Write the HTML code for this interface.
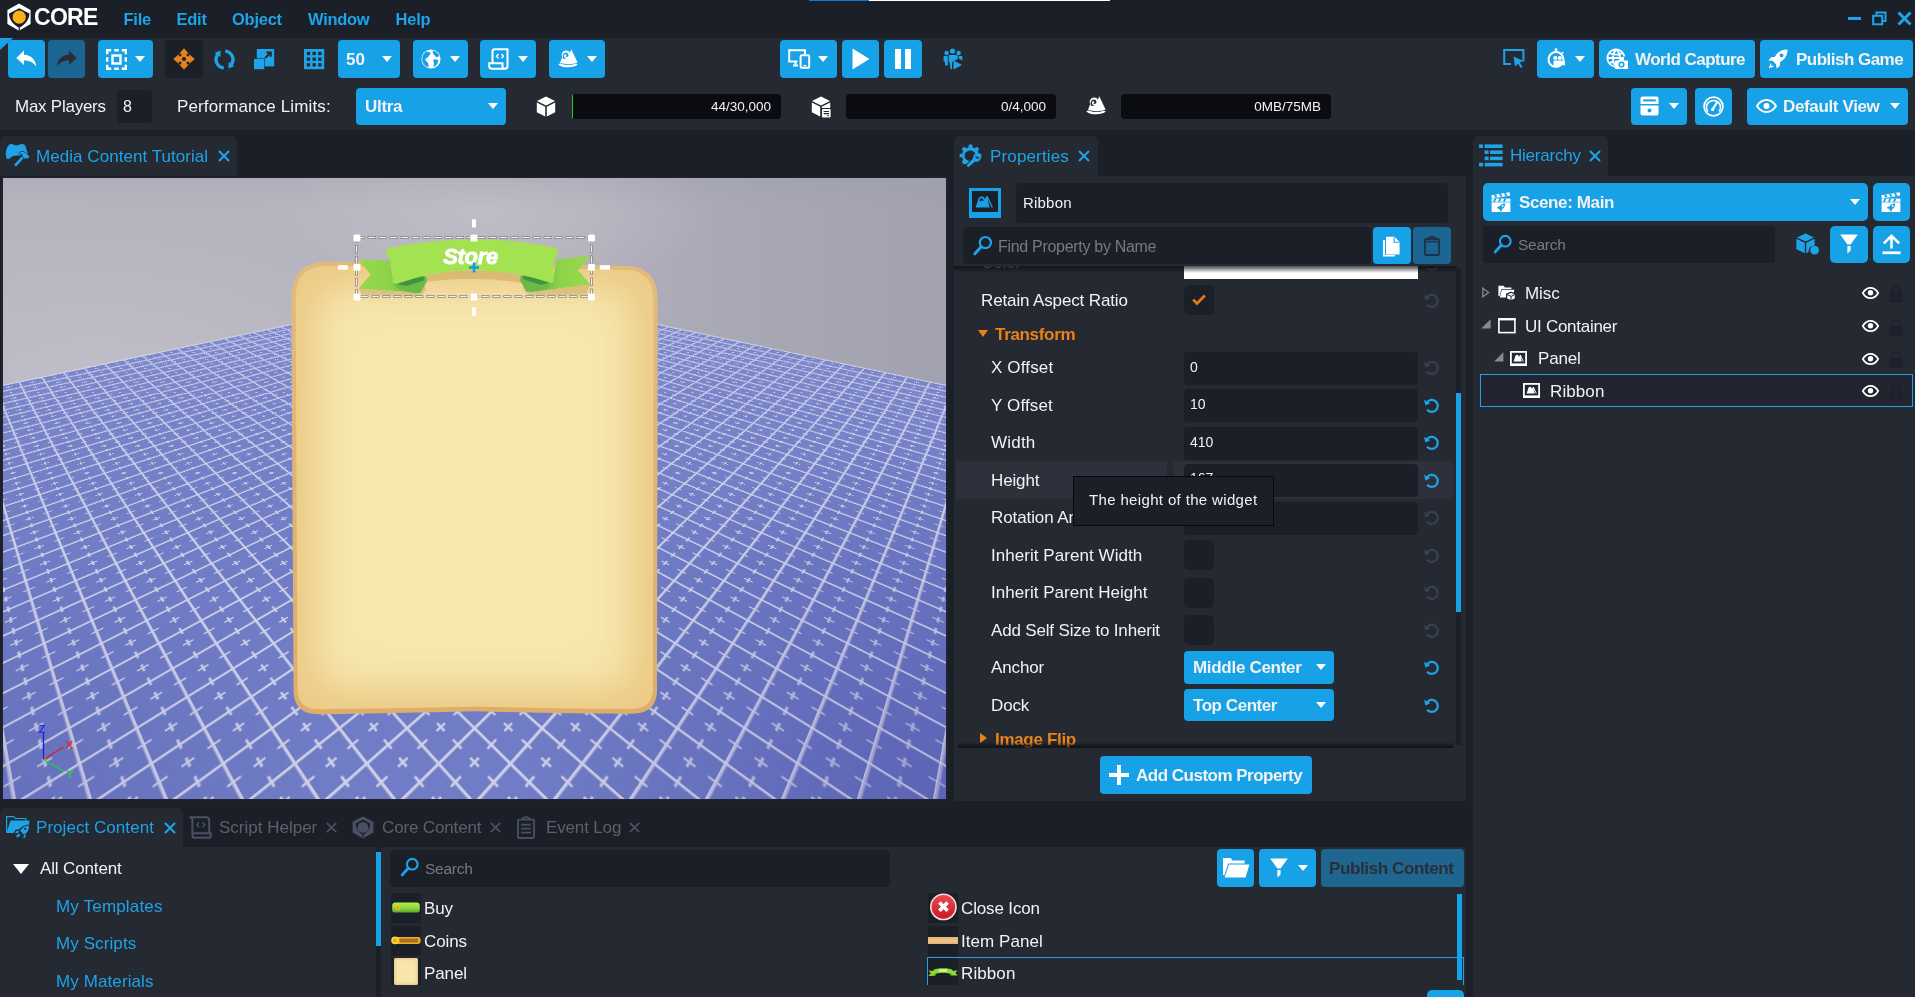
<!DOCTYPE html>
<html lang="en">
<head>
<meta charset="utf-8">
<title>Core Editor - Media Content Tutorial</title>
<style>
*{box-sizing:border-box;margin:0;padding:0}
html,body{width:1915px;height:997px;overflow:hidden;background:#1b1f28}
body{position:relative;font-family:"Liberation Sans",sans-serif;font-size:17px;color:#f2f2f2}
.a{position:absolute}
.pn{position:absolute;background:#252932}
.dk{position:absolute;background:#1b1f28}
.b{position:absolute;background:#17a1e6;border-radius:4px}
.bd{position:absolute;background:#1b6593;border-radius:4px}
.in{position:absolute;background:#1b1f28;border-radius:4px}
.t{position:absolute;white-space:pre;line-height:20px;height:20px;margin-top:-9px}
.bt{font-weight:700;letter-spacing:-0.5px}
.bl{color:#1ea3e8}
.gr{color:#5d606b}
.ph{color:#777a84}
.or{color:#e8831a}
svg{position:absolute;overflow:visible}
.car{position:absolute;width:0;height:0;border-left:5.5px solid transparent;border-right:5.5px solid transparent;border-top:6.5px solid #fff}
</style>
</head>
<body><div id="root" style="position:absolute;left:0;top:0;width:1915px;height:997px;will-change:transform">
<!-- ===== title bar ===== -->
<div class="dk" style="left:0;top:0;width:1915px;height:38px"></div>
<div class="a" style="left:809px;top:0;width:60px;height:1px;background:#0a7ad6"></div>
<div class="a" style="left:869px;top:0;width:241px;height:1px;background:#fff"></div>
<svg style="left:6px;top:3px" width="26" height="29" viewBox="0 0 26 29">
 <path d="M13 0.6 L24.6 7 V21 L13 27.8 L1.4 21 V7 Z" fill="#fff"/>
 <path d="M13.2 5.2 L23.4 10.4 C23.4 16 19.4 21.4 13.8 24.4 V28 H12.6 V24.4 C7 21.4 3 16 3 10.4 Z" fill="#1b1f28"/>
 <circle cx="13.2" cy="14.2" r="6.6" fill="#fdb017"/>
</svg>
<div class="t" style="left:34px;top:17px;font-weight:700;font-size:23px;letter-spacing:-0.7px;color:#fff;line-height:24px;height:24px;margin-top:-12px">CORE</div>
<div class="t bt bl" style="left:123.5px;top:18px;font-size:16.5px;letter-spacing:-0.25px">File</div>
<div class="t bt bl" style="left:176.5px;top:18px;font-size:16.5px;letter-spacing:-0.25px">Edit</div>
<div class="t bt bl" style="left:232px;top:18px;font-size:16.5px;letter-spacing:-0.25px">Object</div>
<div class="t bt bl" style="left:308px;top:18px;font-size:16.5px;letter-spacing:-0.3px">Window</div>
<div class="t bt bl" style="left:395.5px;top:18px;font-size:16.5px;letter-spacing:-0.2px">Help</div>
<!-- window controls -->
<div class="a" style="left:1848px;top:17px;width:13px;height:3px;background:#1ea3e8"></div>
<svg style="left:1872px;top:11px" width="15" height="15" viewBox="0 0 15 15" fill="none" stroke="#1ea3e8" stroke-width="2"><path d="M4.5 4 V1.5 H13.5 V10 H10.5"/><rect x="1.2" y="4.8" width="9" height="8.5"/></svg>
<svg style="left:1897px;top:11px" width="15" height="15" viewBox="0 0 15 15" fill="none" stroke="#1ea3e8" stroke-width="3"><path d="M1.5 1.5 L13.5 13.5 M13.5 1.5 L1.5 13.5"/></svg>

<!-- ===== toolbar ===== -->
<div class="pn" style="left:0;top:38px;width:1915px;height:92px"></div>
<svg style="left:0;top:38px" width="13" height="12"><path d="M0 0 H13 L0 12 Z" fill="#17a1e6"/></svg>
<!-- undo / redo -->
<div class="b" style="left:8px;top:40px;width:37px;height:38px"></div>
<svg style="left:16px;top:50px" width="21" height="18" viewBox="0 0 21 18"><path d="M8 0.5 L0.3 8 L8 15 V10.5 C13 10.5 17 12 20.3 16.5 C19.5 9.5 15 5 8 4.8 Z" fill="#fff"/></svg>
<div class="bd" style="left:48px;top:40px;width:37px;height:38px"></div>
<svg style="left:56px;top:50px" width="21" height="18" viewBox="0 0 21 18"><path d="M13 0.5 L20.7 8 L13 15 V10.5 C8 10.5 4 12 0.7 16.5 C1.5 9.5 6 5 13 4.8 Z" fill="#2a2d33"/></svg>
<!-- select -->
<div class="b" style="left:98px;top:40px;width:55px;height:38px"></div>
<svg style="left:106px;top:49px" width="21" height="21" viewBox="0 0 21 21" fill="none" stroke="#fff" stroke-width="2.4"><path d="M1.2 5.2 V1.2 H5.2 M15.8 1.2 H19.8 V5.2 M19.8 15.8 V19.8 H15.8 M5.2 19.8 H1.2 V15.8 M8.2 1.2 H12.8 M8.2 19.8 H12.8 M1.2 8.2 V12.8 M19.8 8.2 V12.8"/><rect x="6.5" y="6.5" width="8" height="8"/></svg>
<div class="car" style="left:135px;top:56px"></div>
<!-- move -->
<div class="dk" style="left:165px;top:40px;width:38px;height:38px;border-radius:4px"></div>
<svg style="left:173px;top:48px" width="22" height="22" viewBox="0 0 22 22"><path d="M11 0.3 L15.8 5.8 H13.7 V8.3 H16.2 V6.2 L21.7 11 L16.2 15.8 V13.7 H13.7 V16.2 H15.8 L11 21.7 L6.2 16.2 H8.3 V13.7 H5.8 V15.8 L0.3 11 L5.8 6.2 V8.3 H8.3 V5.8 H6.2 Z" fill="#e8831a"/><circle cx="11" cy="11" r="2.1" fill="#1b1f28"/></svg>
<!-- rotate -->
<svg style="left:213.6px;top:48.6px" width="21" height="21" viewBox="0 0 21 21" fill="none" stroke="#1ea3e8" stroke-width="3.4"><path d="M9.8 18.9 A8.4 8.4 0 0 1 3.6 5.7"/><path d="M11.2 2.1 A8.4 8.4 0 0 1 17.4 15.3"/><path d="M6.4 1.6 L0.6 3.9 L6.6 8 Z M14.6 19.4 L20.4 17.1 L14.4 13 Z" fill="#1ea3e8" stroke="none"/></svg>
<!-- scale -->
<svg style="left:254px;top:48.8px" width="21" height="21" viewBox="0 0 21 21" fill="#1ea3e8"><rect x="2.8" y="0" width="17.4" height="17.4"/><rect x="-0.6" y="9.3" width="11.5" height="11.5" fill="#252932"/><rect x="0" y="9.9" width="10.3" height="10.3"/><path d="M11.2 9 L16 4.2 M12.4 3.4 H16.8 V7.8" stroke="#252932" stroke-width="2" fill="none"/></svg>
<!-- grid -->
<svg style="left:303.8px;top:48.8px" width="21" height="21" viewBox="0 0 21 21"><rect x="0" y="0" width="20.2" height="20.2" fill="#1ea3e8"/><g fill="#252932"><rect x="2.8" y="2.8" width="3.3" height="3.3"/><rect x="8.5" y="2.8" width="3.3" height="3.3"/><rect x="14.2" y="2.8" width="3.3" height="3.3"/><rect x="2.8" y="8.5" width="3.3" height="3.3"/><rect x="8.5" y="8.5" width="3.3" height="3.3"/><rect x="14.2" y="8.5" width="3.3" height="3.3"/><rect x="2.8" y="14.2" width="3.3" height="3.3"/><rect x="8.5" y="14.2" width="3.3" height="3.3"/><rect x="14.2" y="14.2" width="3.3" height="3.3"/></g></svg>
<div class="b" style="left:338px;top:40px;width:62px;height:38px"></div>
<div class="t bt" style="left:346px;top:59px;letter-spacing:0">50</div>
<div class="car" style="left:382px;top:56px"></div>
<!-- globe -->
<div class="b" style="left:413px;top:40px;width:55px;height:38px"></div>
<svg style="left:421px;top:49px" width="20" height="20" viewBox="0 0 20 20"><circle cx="10" cy="10" r="9.6" fill="#fff"/><path d="M5 2.5 C7 3 9 2.5 9.5 4 C10 5.5 8 6 7.5 7.5 C7 9 5 8.5 4.5 10 C4 12 6 12.5 7 14 C7.6 15 7 17 8 18.5 C3.5 17.5 1 14 1.2 9.5 C1.4 6.5 3 4 5 2.5 Z M12 1.4 C15 2 17.5 4 18.5 7.5 C17 7 16.5 8.5 15 8 C13.5 7.5 14 6 12.8 5.5 C11.8 5 12.5 3.5 11.5 3 Z M13 10.5 C14.5 10 16 11 17.5 11.5 C17 14 15.5 16.5 13 18 C12 16.5 13.5 15 12.8 13.5 C12.3 12.5 12 11 13 10.5 Z" fill="#17a1e6"/></svg>
<div class="car" style="left:450px;top:56px"></div>
<!-- script -->
<div class="b" style="left:480px;top:40px;width:56px;height:38px"></div>
<svg style="left:488px;top:48px" width="21" height="22" viewBox="0 0 21 22" fill="none" stroke="#fff" stroke-width="2"><path d="M4.5 15 V3.5 C4.5 2 5.5 1.2 7 1.2 H19.5 V18 C19.5 19.8 18.5 20.8 17 20.8 H4 C2 20.8 1.2 19.5 1.2 18 V15.2 H14.5 V18.5 C14.5 20 15.5 20.8 17 20.8"/><path d="M10.5 6 L8.5 8.2 L10.5 10.4 M13.5 6 L15.5 8.2 L13.5 10.4" stroke-width="1.4"/></svg>
<div class="car" style="left:518px;top:56px"></div>
<!-- hat -->
<div class="b" style="left:549px;top:40px;width:56px;height:38px"></div>
<svg style="left:558px;top:49px" width="20" height="19" viewBox="0 0 20 19" fill="#fff"><path d="M13.2 0.3 L19.6 13.6 C14.5 15.6 6.5 15.6 2 13.8 L4.2 8.2 C2.8 5.4 4.6 1.9 8 1.6 C9.8 1.5 11.2 2.4 11.9 3.7 Z"/><path d="M0.4 15.4 C1.2 14.4 2.2 14.2 3.2 14.8 C8 16.6 13 16.4 17.4 14.8 C18.4 14.4 19.2 14.8 19.7 15.6 C16.5 19.2 3.5 19.2 0.4 15.4 Z"/><path d="M7.8 3.4 C9.4 3.4 10.5 4.6 10.5 6 C10.5 7.2 9.6 8 8.6 8 C8 8 7.5 7.7 7.3 7.2 C8 7.2 8.5 6.6 8.4 6 C8.3 5.4 7.7 5 7 5.2 C6.2 5.4 5.8 6.2 6 7.2 C6.3 8.6 7.4 9.4 8.8 9.4 L5.4 10 C4.6 8.8 4.4 7.4 4.8 6 C5.2 4.4 6.4 3.4 7.8 3.4 Z" fill="#17a1e6"/></svg>
<div class="car" style="left:587px;top:56px"></div>
<!-- center: preview -->
<div class="b" style="left:780px;top:40px;width:57px;height:38px"></div>
<svg style="left:788px;top:49px" width="23" height="20" viewBox="0 0 23 20" fill="none" stroke="#fff" stroke-width="2"><path d="M9.5 12.5 H1.2 V1.2 H17 V5"/><path d="M5 16.5 H10" /><path d="M7.5 13 V16"/><rect x="12.6" y="6.2" width="8.6" height="12.6" rx="1.2"/><path d="M15.5 16.6 H18.3" stroke-width="1.3"/></svg>
<div class="car" style="left:818px;top:56px"></div>
<div class="b" style="left:842px;top:40px;width:37px;height:38px"></div>
<svg style="left:852px;top:48px" width="18" height="22"><path d="M0.5 0.5 L17.5 11 L0.5 21.5 Z" fill="#fff"/></svg>
<div class="b" style="left:884px;top:40px;width:38px;height:38px"></div>
<div class="a" style="left:895px;top:49px;width:6px;height:20px;background:#fff"></div>
<div class="a" style="left:905px;top:49px;width:6px;height:20px;background:#fff"></div>
<!-- people -->
<svg style="left:943px;top:48px" width="20" height="22" viewBox="0 0 20 22" fill="#1ea3e8"><circle cx="9.5" cy="3" r="2.6"/><circle cx="3.6" cy="5" r="2.2"/><circle cx="15.6" cy="5" r="2.2"/><path d="M5.8 7 H13.2 C14.3 7 14.8 7.8 14.8 9 V11 L9 14 V21 H7.5 L6.8 14.5 L5.8 14 Z"/><path d="M1 8 H4.8 V17.5 H2.2 L1.8 13.5 L0.6 13 V9 C0.6 8.3 0.8 8 1 8 Z"/><path d="M15.8 8 H18.4 C19 8 19.4 8.5 19.4 9.2 V12.5 L15.8 10.5 Z"/><path d="M10.5 12.5 L19 17 L10.5 21.5 Z"/></svg>
<!-- right side -->
<svg style="left:1503px;top:48px" width="22" height="22" viewBox="0 0 22 22" fill="none" stroke="#1ea3e8" stroke-width="2"><path d="M8 16 H1.2 V2 H20.4 V13.5"/><path d="M10.5 8.5 L20.5 13 L16.8 14.6 L19.5 19 L17.8 20 L15 15.8 L12 18.5 Z" fill="#1ea3e8" stroke="none"/></svg>
<div class="b" style="left:1537px;top:40px;width:57px;height:38px"></div>
<svg style="left:1547px;top:48px" width="20" height="21" viewBox="0 0 20 21" fill="none" stroke="#fff" stroke-width="2"><circle cx="9" cy="11.5" r="7.5"/><path d="M9 4 V1.5" /><circle cx="9" cy="1.6" r="1" fill="#fff" stroke-width="1"/><path d="M14.8 5.5 L16.3 4" stroke-width="1.6"/><g fill="#fff" stroke="none"><circle cx="8.3" cy="10" r="2.1"/><circle cx="12.8" cy="10" r="2.1"/><rect x="6.5" y="12.5" width="8.5" height="5.5" rx="0.8"/><path d="M15 14.2 L18 12.8 V17.8 L15 16.4 Z"/></g></svg>
<div class="car" style="left:1575px;top:56px"></div>
<div class="b" style="left:1599px;top:40px;width:156px;height:38px"></div>
<svg style="left:1606px;top:48px" width="23" height="22" viewBox="0 0 23 22" fill="none" stroke="#fff" stroke-width="1.8"><path d="M9 18.6 A8.6 8.6 0 1 1 18.4 8.5"/><path d="M1.5 10 H18 M10 1.5 C6.5 5 6 12 8.5 17 M10 1.5 C13 4 14 7 14 9.5 M3 5 C7 7 13 7 17 5 M3 15 C5 14.2 7 14 8.5 14"/><g fill="#fff" stroke="none"><path d="M10 12.5 H12.5 L13.5 11 H17.5 L18.5 12.5 H21 C21.6 12.5 22 13 22 13.5 V20 C22 20.6 21.6 21 21 21 H10 C9.4 21 9 20.6 9 20 V13.5 C9 13 9.4 12.5 10 12.5 Z"/></g><circle cx="15.5" cy="16.6" r="2.3" stroke="#17a1e6" stroke-width="1.5" fill="#fff"/></svg>
<div class="t bt" style="left:1635px;top:59px;letter-spacing:-0.52px">World Capture</div>
<div class="b" style="left:1760px;top:40px;width:153px;height:38px"></div>
<svg style="left:1768px;top:49px" width="20" height="20" viewBox="0 0 20 20" fill="#fff"><path d="M19.5 0.5 C14 0.3 9.5 3 6.8 8 L3 8.2 L0.5 11.5 L4.5 11.8 L8.2 15.5 L8.5 19.5 L11.8 17 L12 13.2 C17 10.5 19.7 6 19.5 0.5 Z"/><circle cx="13.6" cy="6.4" r="1.9" fill="#17a1e6"/><path d="M2.5 14 L0.8 19.2 L6 17.5 L4.8 16.6 L3 17 L3.4 15.2 Z"/></svg>
<div class="t bt" style="left:1796px;top:59px;letter-spacing:-0.52px">Publish Game</div>

<!-- row 2 -->
<div class="t" style="left:15px;top:106px;letter-spacing:-0.25px">Max Players</div>
<div class="in" style="left:117px;top:90px;width:35px;height:33px"></div>
<div class="t" style="left:123px;top:106px;font-size:16px">8</div>
<div class="t" style="left:177px;top:106px;letter-spacing:0.14px">Performance Limits:</div>
<div class="b" style="left:356px;top:88px;width:150px;height:37px"></div>
<div class="t bt" style="left:365px;top:106px;letter-spacing:-0.3px">Ultra</div>
<div class="car" style="left:488px;top:103px"></div>
<svg style="left:536px;top:96px" width="20" height="21" viewBox="0 0 20 21" fill="#fff"><path d="M10 0.5 L19 5 L10 9.5 L1 5 Z"/><path d="M0.8 6.6 L9.2 10.8 V20.5 L0.8 16.2 Z"/><path d="M19.2 6.6 L10.8 10.8 V20.5 L19.2 16.2 Z"/></svg>
<div class="a" style="left:572px;top:94px;width:209px;height:25px;background:#0b0c11;border-radius:4px"></div>
<div class="a" style="left:572px;top:95px;width:1px;height:23px;background:#18d21c"></div>
<div class="t" style="right:1144px;top:106px;font-size:13.5px">44/30,000</div>
<svg style="left:811px;top:96px" width="20" height="22" viewBox="0 0 20 22" fill="#fff"><path d="M10 0.5 L19 5 L10 9.5 L1 5 Z"/><path d="M0.8 6.6 L9.2 10.8 V20.5 L0.8 16.2 Z"/><path d="M19.2 6.6 L10.8 10.8 V12 H19.2 Z"/><rect x="11" y="13" width="8.6" height="8.6" rx="1"/><path d="M12.6 15.5 H18 M12.6 17.6 H18" stroke="#252932" stroke-width="1.1"/><circle cx="17" cy="19.8" r="0.8" fill="#252932"/></svg>
<div class="a" style="left:846px;top:94px;width:210px;height:25px;background:#0b0c11;border-radius:4px"></div>
<div class="t" style="right:869px;top:106px;font-size:13.5px">0/4,000</div>
<svg style="left:1086px;top:96px" width="20" height="19" viewBox="0 0 20 19" fill="#fff"><path d="M13.2 0.3 L19.6 13.6 C14.5 15.6 6.5 15.6 2 13.8 L4.2 8.2 C2.8 5.4 4.6 1.9 8 1.6 C9.8 1.5 11.2 2.4 11.9 3.7 Z"/><path d="M0.4 15.4 C1.2 14.4 2.2 14.2 3.2 14.8 C8 16.6 13 16.4 17.4 14.8 C18.4 14.4 19.2 14.8 19.7 15.6 C16.5 19.2 3.5 19.2 0.4 15.4 Z"/><path d="M7.8 3.4 C9.4 3.4 10.5 4.6 10.5 6 C10.5 7.2 9.6 8 8.6 8 C8 8 7.5 7.7 7.3 7.2 C8 7.2 8.5 6.6 8.4 6 C8.3 5.4 7.7 5 7 5.2 C6.2 5.4 5.8 6.2 6 7.2 C6.3 8.6 7.4 9.4 8.8 9.4 L5.4 10 C4.6 8.8 4.4 7.4 4.8 6 C5.2 4.4 6.4 3.4 7.8 3.4 Z" fill="#252932"/></svg>
<div class="a" style="left:1121px;top:94px;width:210px;height:25px;background:#0b0c11;border-radius:4px"></div>
<div class="t" style="right:594px;top:106px;font-size:13.5px">0MB/75MB</div>
<div class="b" style="left:1631px;top:88px;width:56px;height:37px"></div>
<svg style="left:1640px;top:96px" width="19" height="20" viewBox="0 0 19 20" fill="#fff"><path d="M2.5 0.5 H16.5 C17.6 0.5 18.5 1.4 18.5 2.5 V8 H0.5 V2.5 C0.5 1.4 1.4 0.5 2.5 0.5 Z"/><path d="M0.5 9.6 H18.5 V17.5 C18.5 18.6 17.6 19.5 16.5 19.5 H2.5 C1.4 19.5 0.5 18.6 0.5 17.5 Z"/><rect x="3.2" y="3.4" width="12.6" height="2" fill="#17a1e6"/><circle cx="9.5" cy="14.6" r="2" fill="#17a1e6"/></svg>
<div class="car" style="left:1669px;top:103px"></div>
<div class="b" style="left:1695px;top:88px;width:37px;height:37px"></div>
<svg style="left:1703px;top:96px" width="21" height="21" viewBox="0 0 21 21" fill="none" stroke="#fff" stroke-width="1.8"><circle cx="10.5" cy="10.5" r="9.4"/><path d="M4.8 15.5 A7 7 0 1 1 16.2 15.5" stroke-width="1.6"/><path d="M9.5 13.5 L14 6.5" stroke-width="2.2" stroke-linecap="round"/><circle cx="9.7" cy="13.4" r="1.6" fill="#fff" stroke="none"/></svg>
<div class="b" style="left:1747px;top:88px;width:161px;height:37px"></div>
<svg style="left:1756px;top:99px" width="21" height="14" viewBox="0 0 21 14" fill="none" stroke="#fff" stroke-width="2"><path d="M1 7 C4 2.2 7 1 10.5 1 C14 1 17 2.2 20 7 C17 11.8 14 13 10.5 13 C7 13 4 11.8 1 7 Z"/><circle cx="10.5" cy="7" r="3" fill="#fff" stroke="none"/></svg>
<div class="t bt" style="left:1783px;top:106px;letter-spacing:-0.36px">Default View</div>
<div class="car" style="left:1890px;top:103px"></div>

<!-- gap row -->
<div class="dk" style="left:0;top:130px;width:1915px;height:48px"></div>
<!-- ===== main viewport tab ===== -->
<div class="pn" style="left:0;top:136px;width:237px;height:40px;border-radius:5px 5px 0 0"></div>
<svg style="left:5px;top:144px" width="25" height="24" viewBox="0 0 25 24" fill="#1ea3e8"><path d="M6 0 C8 0 9.5 1.4 11.4 1.4 C13.3 1.4 15 0 17.5 0 C20 0 21 3 21.7 6 C22.3 8 22.8 9.5 22.8 11.4 L16 10.6 L14.6 11.5 C11.5 11.3 9 11.6 7 12.4 C5.6 13.4 4.6 15 3 15 C1.4 15 0.8 13 0.8 10.4 C0.8 6 2.6 0 6 0 Z"/><g stroke="#252932" stroke-width="1.1" paint-order="stroke"><path d="M9.2 20.6 L18.2 10.8 L20.2 12.6 L10.9 22.7 Z"/><path d="M14.2 9 C15.6 7.4 18.2 7.4 20.2 8.6 L24.5 12.6 L22.4 14.9 L21.2 13.7 L20 14.9 L17.2 12.2 L18 11 C17 10.2 15.6 9.6 14.2 9 Z"/></g></svg>
<div class="t bl" style="left:36px;top:156px;letter-spacing:0.05px">Media Content Tutorial</div>
<svg style="left:218px;top:150px" width="12" height="12" viewBox="0 0 12 12" stroke="#1ea3e8" stroke-width="2.1" fill="none"><path d="M1 1 L11 11 M11 1 L1 11"/></svg>

<!-- ===== viewport ===== -->
<div class="a" style="left:1px;top:177px;width:947px;height:624px;background:#20232e"></div>
<div class="a" id="vp" style="left:3px;top:178px;width:943px;height:621px;overflow:hidden;background:linear-gradient(90deg,#b5b4bf 0%,#b4b3be 40%,#b0afbb 62%,#a8a7b4 80%,#a2a1af 100%)">
 <div class="a" style="left:-260px;top:40px;width:720px;height:330px;background:radial-gradient(closest-side,rgba(197,196,205,.7),rgba(197,196,205,0))"></div>
 <div class="a" style="left:250px;top:-50px;width:460px;height:170px;background:radial-gradient(closest-side,rgba(198,197,206,.6),rgba(198,197,206,0))"></div>
 <div class="a" style="left:0px;top:-40px;width:943px;height:70px;background:linear-gradient(180deg,rgba(150,149,163,.45),rgba(150,149,163,0))"></div>
 <div class="a" style="left:0;top:0;width:943px;height:621px;filter:blur(0.7px)">
 <div class="a" id="floor" style="left:0;top:0;width:2000px;height:2000px;transform-origin:0 0;transform:matrix3d(-0.26421404,0.003197351,0,-0.0002532982,0.025353839,0.003197351,0,-0.0002532982,0,0,1,0,471.5,108,0,1);clip-path:polygon(0 0,2000px 0,2000px 1400px,1400px 2000px,0 2000px);background:#707cc5">
  <svg width="2000" height="2000" style="left:0;top:0">
   <defs><pattern id="gp" width="50" height="50" patternUnits="userSpaceOnUse">
    <path d="M0 0 H50 M0 0 V50" stroke="#cdcfe6" stroke-width="4.8" fill="none"/>
    <path d="M25 -6.5 V6.5 M-6.5 25 H6.5 M25 43.5 V56.5 M43.5 25 H56.5 M19 25 H31 M25 19 V31" stroke="#cdcfe6" stroke-width="2.5" fill="none"/>
   </pattern></defs>
   <rect width="2000" height="2000" fill="url(#gp)"/>
  </svg>
 </div>
 </div>
 <div class="a" style="left:0;top:200px;width:943px;height:421px;background:radial-gradient(ellipse 420px 360px at 100% 100%,rgba(52,52,150,.34),rgba(52,52,150,0)),radial-gradient(ellipse 320px 260px at 0% 100%,rgba(52,52,150,.16),rgba(52,52,150,0))"></div>
 <svg style="left:0;top:0" width="943" height="621" viewBox="0 0 943 621"><path d="M471.5 108.0L1058.4 231.8 M471.5 108.0L-115.4 231.8 M464.2 109.5L1058.8 238.3 M478.8 109.5L-115.8 238.3 M456.6 111.1L1059.2 245.1 M486.4 111.1L-116.2 245.1 M448.9 112.8L1059.7 252.2 M494.1 112.8L-116.7 252.2 M441.0 114.4L1060.1 259.8 M502.0 114.4L-117.1 259.8 M432.9 116.2L1060.6 267.8 M510.1 116.2L-117.6 267.8 M424.5 117.9L1061.2 276.4 M518.5 117.9L-118.2 276.4 M415.9 119.7L1061.7 285.4 M527.1 119.7L-118.7 285.4 M407.1 121.6L1062.3 295.0 M535.9 121.6L-119.3 295.0 M398.0 123.5L1063.0 305.3 M545.0 123.5L-120.0 305.3 M388.6 125.5L1063.7 316.3 M554.4 125.5L-120.7 316.3 M379.0 127.5L1064.4 328.0 M564.0 127.5L-121.4 328.0 M369.1 129.6L1065.2 340.7 M573.9 129.6L-122.2 340.7 M358.8 131.8L1066.0 354.3 M584.2 131.8L-123.0 354.3 M348.3 134.0L1067.0 369.0 M594.7 134.0L-124.0 369.0 M337.4 136.3L1067.9 384.9 M605.6 136.3L-124.9 384.9 M326.2 138.7L1069.0 402.2 M616.8 138.7L-126.0 402.2 M314.7 141.1L1070.2 421.1 M628.3 141.1L-127.2 421.1 M302.7 143.6L1071.5 441.8 M640.3 143.6L-128.5 441.8 M290.4 146.2L1072.9 464.6 M652.6 146.2L-129.9 464.6 M277.6 148.9L1074.5 489.8 M665.4 148.9L-131.5 489.8 M264.4 151.7L1076.3 517.7 M678.6 151.7L-133.3 517.7 M250.7 154.6L1078.2 549.0 M692.3 154.6L-135.2 549.0 M236.6 157.6L1080.4 584.2 M706.4 157.6L-137.4 584.2 M221.9 160.7L1082.9 624.1 M721.1 160.7L-139.9 624.1 M206.7 163.9L1085.8 669.7 M736.3 163.9L-142.8 669.7 M190.9 167.2L1089.0 722.4 M752.1 167.2L-146.0 722.4 M174.5 170.7L1000.8 722.4 M768.5 170.7L-57.8 722.4 M157.4 174.3L912.6 722.4 M785.6 174.3L30.4 722.4 M139.7 178.0L824.4 722.4 M803.3 178.0L118.6 722.4 M121.2 181.9L736.2 722.4 M821.8 181.9L206.8 722.4 M102.0 186.0L647.9 722.4 M841.0 186.0L295.1 722.4 M82.0 190.2L559.7 722.4 M861.0 190.2L383.3 722.4 M61.1 194.6L471.5 722.4 M881.9 194.6L471.5 722.4 M39.2 199.2L383.3 722.4 M903.8 199.2L559.7 722.4 M16.4 204.0L295.1 722.4 M926.6 204.0L647.9 722.4 M-7.5 209.1L206.8 722.4 M950.5 209.1L736.2 722.4 M-32.5 214.4L118.6 722.4 M975.5 214.4L824.4 722.4 M-58.8 219.9L30.4 722.4 M1001.8 219.9L912.6 722.4 M-86.4 225.7L-57.8 722.4 M1029.4 225.7L1000.8 722.4 M-115.4 231.8L-146.0 722.4 M1058.4 231.8L1089.0 722.4" fill="none" stroke="#d6d8ec" stroke-opacity=".6" stroke-width="1.4"/></svg>
 <div class="a" style="left:0;top:100px;width:943px;height:300px;clip-path:polygon(471.5px 8px,943px 109px,943px 300px,0 300px,0 109px);background:linear-gradient(180deg,rgba(178,184,230,.26) 0%,rgba(170,177,226,.18) 35%,rgba(160,168,222,.07) 70%,rgba(160,168,222,0) 100%)"></div>
<!--OVERLAY-->
 <svg style="left:0;top:0" width="943" height="621" viewBox="3 178 943 621">
  <defs>
   <filter id="bl18" x="-20%" y="-20%" width="140%" height="140%"><feGaussianBlur stdDeviation="15"/></filter>
   <filter id="bl3" x="-20%" y="-50%" width="140%" height="200%"><feGaussianBlur stdDeviation="2.5"/></filter>
   <linearGradient id="pb" x1="0" y1="0" x2="0" y2="1"><stop offset="0" stop-color="#e2bb7a"/><stop offset="1" stop-color="#dcae6a"/></linearGradient>
   <clipPath id="pin"><path id="pinp" d="M327 266 L474 266.6 L626 270 Q653.5 270.5 653.5 300 L653 689 Q653 708.5 632 709 Q560 708.5 475 706.5 Q390 708.5 318 709.3 Q297.5 709 297.5 689 L295.6 298 Q295.6 266 327 266 Z"/></clipPath>
   <linearGradient id="tl" x1="0" y1="0" x2="1" y2="0"><stop offset="0" stop-color="#97da4c"/><stop offset="0.6" stop-color="#8ed249"/><stop offset="1" stop-color="#62b343"/></linearGradient>
   <linearGradient id="tr" x1="1" y1="0" x2="0" y2="0"><stop offset="0" stop-color="#97da4c"/><stop offset="0.6" stop-color="#8ed249"/><stop offset="1" stop-color="#62b343"/></linearGradient>
  </defs>
  <!-- panel -->
  <path d="M327 261.7 L474 262.4 L626 265.9 Q657.7 266.2 657.7 300 L657 690 Q657 713.5 632 713.8 Q560 713.5 475 711.3 Q390 713.5 318 714.3 Q293.5 714 293.5 690 L291.4 298 Q291.4 262 327 261.7 Z" fill="url(#pb)"/>
  <g clip-path="url(#pin)">
   <rect x="290" y="260" width="370" height="456" fill="#eccb86"/>
   <rect x="313" y="284" width="322" height="408" rx="26" fill="#f3dda1" filter="url(#bl18)"/>
   <rect x="333" y="304" width="282" height="368" rx="26" fill="#f7e7af" filter="url(#bl18)"/>
  </g>
  <!-- ribbon shadow -->
  <g fill="#b48f45" fill-opacity=".34" clip-path="url(#pin)">
   <path d="M398 283 Q436 270.3 474 270.3 Q512 270.3 549 282.5 L556 290 Q512 279 474 279 Q436 279 420 283.5 L412 292 Z"/>
   <path d="M358.5 288.8 L412 292 L424 284 L426 290 L420 296.5 L362 294.5 Z"/>
   <path d="M590.5 284.5 L538 291 L524 283 L523 289 L529 296 L586 294.5 Z"/>
  </g>
  <!-- ribbon tails -->
  <path d="M358.5 259.5 L390 260.5 L394 284 L412 292 L358.5 288.8 L370.5 274.5 Z" fill="url(#tl)"/>
  <path d="M590.5 255.8 L557 259.5 L552 283 L538 291 L590.5 284.5 L578 270.2 Z" fill="url(#tr)"/>
  <!-- folds -->
  <path d="M392.5 282.5 L421 273.8 Q428.5 276 426.6 282 L420.5 292.8 Q411 294.2 402 290.2 Q395 287 392.5 282.5 Z" fill="#6cb947"/>
  <path d="M394.5 282 L419.5 274.6 Q425.6 276.6 424 280.4 L407.5 285.8 Q400 286 394.5 282 Z" fill="#3e953f"/>
  <path d="M553.5 280.6 L526 272.6 Q518.5 275 520.4 281 L526.5 291.6 Q536 293 545 289 Q551 286 553.5 280.6 Z" fill="#6cb947"/>
  <path d="M551.5 280.2 L527.5 273.4 Q521.4 275.4 523 279.2 L539.5 284.6 Q547 284.8 551.5 280.2 Z" fill="#3e953f"/>
  <!-- main band -->
  <path d="M385 251.5 Q388 247 394 247.2 Q430 239.5 474 239.5 Q520 239.5 553 247.5 Q558 248 558.5 252 Q551 262 553.8 281 Q553 284 549 282.5 Q512 270.3 474 270.3 Q436 270.3 398 283.5 Q393 285 392.5 281.5 Q394 262 385 251.5 Z" fill="#a3e250"/>
  <text x="470.5" y="263.5" text-anchor="middle" font-family="'Liberation Sans',sans-serif" font-weight="700" font-style="italic" font-size="22" fill="#fff" letter-spacing="-0.3" stroke="#fff" stroke-width="0.8">Store</text>
  <!-- selection -->
  <g fill="none">
   <rect x="356.5" y="237.5" width="235" height="59" stroke="#808080" stroke-width="2.6" stroke-dasharray="8.4 2.6" stroke-opacity=".9"/>
   <rect x="356.5" y="237.5" width="235" height="59" stroke="#efefef" stroke-width="1.1" stroke-dasharray="7 4" stroke-dashoffset="-0.7"/>
  </g>
  <g fill="#fff">
   <rect x="353.5" y="234.5" width="7" height="7" rx="1.5"/><rect x="470.5" y="234.5" width="7" height="7" rx="1.5"/><rect x="588" y="234.5" width="7" height="7" rx="1.5"/>
   <rect x="353.5" y="263.8" width="7" height="7" rx="1.5"/><rect x="588" y="263.8" width="7" height="7" rx="1.5"/>
   <rect x="353.5" y="293.5" width="7" height="7" rx="1.5"/><rect x="470.5" y="293.5" width="7" height="7" rx="1.5"/><rect x="588" y="293.5" width="7" height="7" rx="1.5"/>
   <rect x="472" y="219.3" width="4" height="8.2"/><rect x="472" y="307.3" width="4" height="8.4"/>
   <rect x="338" y="265.2" width="9.8" height="4.4"/><rect x="599.8" y="265.2" width="10.2" height="4.4"/>
  </g>
  <path d="M469 267.5 H479 M474 262.5 V272.5" stroke="#1797ea" stroke-width="2.4"/>
  <!-- gizmo -->
  <g stroke-width="1.25" fill="none"><path d="M43.5 759.5 V733" stroke="#1020e8"/><path d="M43.5 759.5 L63.5 747" stroke="#e01822"/><path d="M43.5 759.5 L64 771.5" stroke="#18d828"/></g>
  <g font-family="'Liberation Sans',sans-serif" font-weight="700" font-size="11.5"><text x="38.6" y="732.5" fill="#2232f0">Z</text><text x="65.6" y="748.6" fill="#d8303a">X</text><text x="66" y="778.4" fill="#30cc40">Y</text></g>
 </svg>
<!--/OVERLAY-->
</div>
<!-- ===== properties panel ===== -->
<div class="pn" style="left:954px;top:136px;width:144px;height:41px;border-radius:5px 5px 0 0"></div>
<div class="pn" style="left:954px;top:176px;width:512px;height:625px"></div>
<svg style="left:959px;top:144px" width="24" height="24" viewBox="0 0 24 24"><g fill="#1ea3e8"><path d="M10 0.6 H13 L13.6 3.3 L15.6 4.2 L18 2.7 L20.2 4.9 L18.7 7.3 L19.5 9.3 L22.3 10 V13 L19.6 13.6 C19 13 18 12.6 17 12.6 C17 9 14.5 6.4 11.3 6.4 C8 6.4 5.6 8.8 5.6 11.8 C5.6 14.6 7.5 16.6 10.2 17 L7.6 19.9 L4.9 20.3 L2.7 18 L4.2 15.7 L3.4 13.7 L0.6 13 V10 L3.3 9.4 L4.2 7.3 L2.7 4.9 L4.9 2.7 L7.3 4.2 L9.3 3.4 Z"/><path d="M9.2 23.2 L7.6 21.6 L14 14.6 C13.4 12.4 14.4 10.2 16.6 9.4 C17.4 9.1 18.2 9.1 19 9.3 L16.4 12 L17 14.2 L19.2 14.8 L21.8 12.2 C22.4 14.4 21.4 16.6 19.2 17.4 C18.2 17.8 17.2 17.7 16.2 17.4 Z"/></g><circle cx="11.3" cy="11.8" r="3.1" fill="#252932"/></svg>
<div class="t bl" style="left:990px;top:156px;letter-spacing:0.15px">Properties</div>
<svg style="left:1078px;top:150px" width="12" height="12" viewBox="0 0 12 12" stroke="#1ea3e8" stroke-width="2.1" fill="none"><path d="M1 1 L11 11 M11 1 L1 11"/></svg>
<div class="a" style="left:1184px;top:262px;width:234px;height:17px;background:#fff"></div>
<div class="t" style="left:981px;top:262px;letter-spacing:-0.13px;color:#9a9ca3">Color</div>
<svg style="left:1423.8px;top:256px" width="15.4" height="15.4" viewBox="0 0 15.4 15.4" fill="none" stroke="#3a3f52" stroke-width="2.2"><path d="M2.9 4.4 A6 6 0 1 1 3.1 11.7"/><path d="M0 1.8 L6.3 5.2 L1.4 7.5 Z" fill="#3a3f52" stroke="none"/></svg>
<div class="a" style="left:954px;top:266px;width:503px;height:7px;background:linear-gradient(180deg,rgba(10,11,16,.75),rgba(10,11,16,0))"></div>
<div class="pn" style="left:954px;top:176px;width:512px;height:90px"></div>
<div class="a" style="left:969px;top:188px;width:32px;height:30px;background:#17a1e6"></div>
<div class="a" style="left:972px;top:191px;width:26px;height:21px;background:#1b1f28"></div>
<svg style="left:975px;top:194px" width="20" height="15" viewBox="0 0 20 15" fill="#17a1e6"><path d="M0.5 13.5 L2.5 8 C3 4.5 4.5 2.2 6.5 2.2 C8 2.2 9.2 3.4 9.8 5 L11.6 2 L12.6 2 L18 13.5 H16.6 L12.4 4.6 L14.6 13.5 Z"/><path d="M4.2 7.2 C4.8 5 5.6 4 6.5 4 C7.4 4 8.2 5 8.8 7.2 L7.8 6.4 L7.1 7.4 L6.4 6.3 L5.6 7.4 L5 6.5 Z" fill="#1b1f28"/></svg>
<div class="in" style="left:1016px;top:183px;width:432px;height:40px"></div>
<div class="t" style="left:1023px;top:202px;font-size:15px;letter-spacing:0.2px">Ribbon</div>
<div class="in" style="left:963px;top:227px;width:408px;height:37px"></div>
<svg style="left:973px;top:235px" width="20" height="21" viewBox="0 0 20 21" fill="none" stroke="#1ea3e8"><circle cx="12.4" cy="7.6" r="5.6" stroke-width="2.2"/><path d="M8.2 11.8 L1.8 18.8" stroke-width="3" stroke-linecap="round"/></svg>
<div class="t ph" style="left:998px;top:246px;font-size:16px;letter-spacing:-0.3px">Find Property by Name</div>
<div class="b" style="left:1373px;top:227px;width:38px;height:37px"></div>
<svg style="left:1382px;top:236px" width="19" height="21" viewBox="0 0 19 21"><path d="M1 4 H3 V19 H13 V20.5 H1 Z" fill="#fff"/><path d="M4 0.8 H12.5 L17.6 6 V18.6 H4 Z" fill="#fff"/><path d="M12.2 1.2 V6.3 H17.3" fill="none" stroke="#17a1e6" stroke-width="1.1"/></svg>
<div class="bd" style="left:1413px;top:227px;width:38px;height:37px"></div>
<svg style="left:1424px;top:235px" width="16" height="21" viewBox="0 0 16 21" fill="none" stroke="#1f3145" stroke-width="1.8"><rect x="1" y="4" width="14" height="16" rx="1"/><path d="M5 4 V2.4 H6.8 C7 0.8 9 0.8 9.2 2.4 H11 V4" stroke-width="1.5"/><path d="M1.5 6.6 H14.5" stroke-width="1.5"/></svg>
<div class="t" style="left:981px;top:300px;letter-spacing:-0.13px">Retain Aspect Ratio</div>
<div class="in" style="left:1184px;top:285px;width:30px;height:30px;border-radius:5px"></div><svg style="left:1192px;top:294px" width="14" height="12" viewBox="0 0 14 12"><path d="M1.2 5.6 L5 9.6 L12.8 1.6" fill="none" stroke="#e0791a" stroke-width="2.8"/></svg>
<svg style="left:1423.8px;top:292.5px" width="15.4" height="15.4" viewBox="0 0 15.4 15.4" fill="none" stroke="#3a3f52" stroke-width="2.2"><path d="M2.9 4.4 A6 6 0 1 1 3.1 11.7"/><path d="M0 1.8 L6.3 5.2 L1.4 7.5 Z" fill="#3a3f52" stroke="none"/></svg>
<div class="a" style="left:978px;top:330px;width:0;height:0;border-left:5px solid transparent;border-right:5px solid transparent;border-top:7px solid #e8831a"></div>
<div class="t bt or" style="left:995px;top:334px;letter-spacing:-0.32px">Transform</div>
<div class="t" style="left:991px;top:367px;letter-spacing:0.15px">X Offset</div>
<div class="in" style="left:1184px;top:351.5px;width:234px;height:33px"></div><div class="t" style="left:1190px;top:365.5px;font-size:14px">0</div>
<svg style="left:1423.8px;top:360.0px" width="15.4" height="15.4" viewBox="0 0 15.4 15.4" fill="none" stroke="#3a3f52" stroke-width="2.2"><path d="M2.9 4.4 A6 6 0 1 1 3.1 11.7"/><path d="M0 1.8 L6.3 5.2 L1.4 7.5 Z" fill="#3a3f52" stroke="none"/></svg>
<div class="t" style="left:991px;top:405px;letter-spacing:0.15px">Y Offset</div>
<div class="in" style="left:1184px;top:389px;width:234px;height:33px"></div><div class="t" style="left:1190px;top:403px;font-size:14px">10</div>
<svg style="left:1423.8px;top:397.5px" width="15.4" height="15.4" viewBox="0 0 15.4 15.4" fill="none" stroke="#1ea3e8" stroke-width="2.2"><path d="M2.9 4.4 A6 6 0 1 1 3.1 11.7"/><path d="M0 1.8 L6.3 5.2 L1.4 7.5 Z" fill="#1ea3e8" stroke="none"/></svg>
<div class="t" style="left:991px;top:442px;letter-spacing:0.2px">Width</div>
<div class="in" style="left:1184px;top:426.5px;width:234px;height:33px"></div><div class="t" style="left:1190px;top:440.5px;font-size:14px">410</div>
<svg style="left:1423.8px;top:435.0px" width="15.4" height="15.4" viewBox="0 0 15.4 15.4" fill="none" stroke="#1ea3e8" stroke-width="2.2"><path d="M2.9 4.4 A6 6 0 1 1 3.1 11.7"/><path d="M0 1.8 L6.3 5.2 L1.4 7.5 Z" fill="#1ea3e8" stroke="none"/></svg>
<div class="a" style="left:956px;top:461px;width:211px;height:38px;background:#2e313c"></div>
<div class="a" style="left:1173px;top:461px;width:280px;height:38px;background:#2e313c"></div>
<div class="t" style="left:991px;top:480px;letter-spacing:-0.13px">Height</div>
<div class="in" style="left:1184px;top:464px;width:234px;height:33px"></div><div class="t" style="left:1190px;top:476.5px;font-size:14px">167</div>
<svg style="left:1423.8px;top:472.5px" width="15.4" height="15.4" viewBox="0 0 15.4 15.4" fill="none" stroke="#1ea3e8" stroke-width="2.2"><path d="M2.9 4.4 A6 6 0 1 1 3.1 11.7"/><path d="M0 1.8 L6.3 5.2 L1.4 7.5 Z" fill="#1ea3e8" stroke="none"/></svg>
<div class="t" style="left:991px;top:517px;letter-spacing:-0.1px">Rotation Angle</div>
<div class="in" style="left:1184px;top:501.5px;width:234px;height:33px"></div><div class="t" style="left:1190px;top:515.5px;font-size:14px">0</div>
<svg style="left:1423.8px;top:510.0px" width="15.4" height="15.4" viewBox="0 0 15.4 15.4" fill="none" stroke="#3a3f52" stroke-width="2.2"><path d="M2.9 4.4 A6 6 0 1 1 3.1 11.7"/><path d="M0 1.8 L6.3 5.2 L1.4 7.5 Z" fill="#3a3f52" stroke="none"/></svg>
<div class="t" style="left:991px;top:555px;letter-spacing:0.05px">Inherit Parent Width</div>
<div class="in" style="left:1184px;top:540px;width:30px;height:30px;border-radius:5px"></div>
<svg style="left:1423.8px;top:547.5px" width="15.4" height="15.4" viewBox="0 0 15.4 15.4" fill="none" stroke="#3a3f52" stroke-width="2.2"><path d="M2.9 4.4 A6 6 0 1 1 3.1 11.7"/><path d="M0 1.8 L6.3 5.2 L1.4 7.5 Z" fill="#3a3f52" stroke="none"/></svg>
<div class="t" style="left:991px;top:592px;letter-spacing:0.03px">Inherit Parent Height</div>
<div class="in" style="left:1184px;top:577.5px;width:30px;height:30px;border-radius:5px"></div>
<svg style="left:1423.8px;top:585.0px" width="15.4" height="15.4" viewBox="0 0 15.4 15.4" fill="none" stroke="#3a3f52" stroke-width="2.2"><path d="M2.9 4.4 A6 6 0 1 1 3.1 11.7"/><path d="M0 1.8 L6.3 5.2 L1.4 7.5 Z" fill="#3a3f52" stroke="none"/></svg>
<div class="t" style="left:991px;top:630px;letter-spacing:-0.17px">Add Self Size to Inherit</div>
<div class="in" style="left:1184px;top:615px;width:30px;height:30px;border-radius:5px"></div>
<svg style="left:1423.8px;top:622.5px" width="15.4" height="15.4" viewBox="0 0 15.4 15.4" fill="none" stroke="#3a3f52" stroke-width="2.2"><path d="M2.9 4.4 A6 6 0 1 1 3.1 11.7"/><path d="M0 1.8 L6.3 5.2 L1.4 7.5 Z" fill="#3a3f52" stroke="none"/></svg>
<div class="t" style="left:991px;top:667px;letter-spacing:-0.13px">Anchor</div>
<div class="b" style="left:1184px;top:651px;width:150px;height:33px"></div><div class="t bt" style="left:1193px;top:667px;letter-spacing:-0.3px">Middle Center</div><div class="car" style="left:1316px;top:664px"></div>
<svg style="left:1423.8px;top:660.0px" width="15.4" height="15.4" viewBox="0 0 15.4 15.4" fill="none" stroke="#1ea3e8" stroke-width="2.2"><path d="M2.9 4.4 A6 6 0 1 1 3.1 11.7"/><path d="M0 1.8 L6.3 5.2 L1.4 7.5 Z" fill="#1ea3e8" stroke="none"/></svg>
<div class="t" style="left:991px;top:705px;letter-spacing:-0.13px">Dock</div>
<div class="b" style="left:1184px;top:689px;width:150px;height:32px"></div><div class="t bt" style="left:1193px;top:705px;letter-spacing:-0.45px">Top Center</div><div class="car" style="left:1316px;top:702px"></div>
<svg style="left:1423.8px;top:697.5px" width="15.4" height="15.4" viewBox="0 0 15.4 15.4" fill="none" stroke="#1ea3e8" stroke-width="2.2"><path d="M2.9 4.4 A6 6 0 1 1 3.1 11.7"/><path d="M0 1.8 L6.3 5.2 L1.4 7.5 Z" fill="#1ea3e8" stroke="none"/></svg>
<div class="a" style="left:980px;top:733px;width:0;height:0;border-top:5px solid transparent;border-bottom:5px solid transparent;border-left:7px solid #e8831a"></div>
<div class="t bt or" style="left:995px;top:739px;letter-spacing:-0.32px">Image Flip</div>
<div class="pn" style="left:954px;top:748px;width:503px;height:53px"></div>
<div class="a" style="left:958px;top:742px;width:495px;height:6px;background:linear-gradient(0deg,rgba(10,11,16,.8),rgba(10,11,16,0))"></div>
<div class="b" style="left:1100px;top:756px;width:212px;height:38px"></div>
<div class="a" style="left:1109px;top:773px;width:20px;height:4px;background:#fff"></div><div class="a" style="left:1117px;top:765px;width:4px;height:20px;background:#fff"></div>
<div class="t bt" style="left:1136px;top:775px;letter-spacing:-0.5px">Add Custom Property</div>
<div class="dk" style="left:1456px;top:268px;width:5px;height:477px"></div>
<div class="a" style="left:1456px;top:393px;width:5px;height:219px;background:#17a1e6"></div>
<div class="a" style="left:1073px;top:475.5px;width:201px;height:50.5px;background:#1b1f28;border:1px solid #07080b"></div>
<div class="t" style="left:1089px;top:499px;font-size:15px;letter-spacing:0.35px">The height of the widget</div>
<!-- ===== hierarchy panel ===== -->
<div class="pn" style="left:1473px;top:136px;width:135px;height:41px;border-radius:5px 5px 0 0"></div>
<div class="pn" style="left:1473px;top:176px;width:442px;height:821px"></div>
<svg style="left:1479px;top:144px" width="24" height="23" viewBox="0 0 24 23" fill="#1ea3e8"><rect x="0" y="0.4" width="4" height="3.6"/><rect x="5.6" y="0.4" width="18" height="3.6"/><rect x="5.6" y="6.4" width="4" height="3.6"/><rect x="11" y="6.4" width="12.6" height="3.6"/><rect x="5.6" y="12.6" width="4" height="3.6"/><rect x="11" y="12.6" width="12.6" height="3.6"/><rect x="0" y="18.8" width="4" height="3.6"/><rect x="5.6" y="18.8" width="18" height="3.6"/></svg>
<div class="t bl" style="left:1510px;top:155px;letter-spacing:-0.23px">Hierarchy</div>
<svg style="left:1589px;top:150px" width="12" height="12" viewBox="0 0 12 12" stroke="#1ea3e8" stroke-width="2.1" fill="none"><path d="M1 1 L11 11 M11 1 L1 11"/></svg>
<div class="b" style="left:1483px;top:183px;width:385px;height:38px;border-radius:5px"></div>
<svg style="left:1491px;top:192px" width="20" height="20" viewBox="0 0 20 20"><g fill="#fff"><path d="M0.3 3.2 L18.6 0.2 L19.2 3.4 L0.9 6.4 Z"/><rect x="0.6" y="6.6" width="18.8" height="3.2"/><rect x="0.6" y="10.4" width="18.8" height="9.6"/></g><g fill="#17a1e6"><path d="M3 2.9 L5 2.55 L6.4 5.3 L4.4 5.65 Z M8 2.1 L10 1.75 L11.4 4.5 L9.4 4.85 Z M13 1.25 L15 0.9 L16.4 3.65 L14.4 4 Z"/><path d="M3.4 6.6 L5.4 6.6 L4 9.8 L2 9.8 Z M8.4 6.6 L10.4 6.6 L9 9.8 L7 9.8 Z M13.4 6.6 L15.4 6.6 L14 9.8 L12 9.8 Z"/><path d="M14.2 11.4 C11.6 11.3 9.6 12.5 8.4 14.6 L6.8 14.8 L5.6 16.2 L7.4 16.4 L9.2 18.2 L9.4 20 L10.8 18.8 L11 17.2 C13.1 16 14.3 14 14.2 11.4 Z"/></g><circle cx="11.6" cy="14" r="0.9" fill="#fff"/></svg>
<div class="t bt" style="left:1519px;top:202px;letter-spacing:-0.38px">Scene: Main</div>
<div class="car" style="left:1850px;top:199px"></div>
<div class="b" style="left:1873px;top:183px;width:37px;height:38px;border-radius:5px"></div>
<svg style="left:1881px;top:192px" width="20" height="20" viewBox="0 0 20 20"><g fill="#fff"><path d="M0.3 3.2 L18.6 0.2 L19.2 3.4 L0.9 6.4 Z"/><rect x="0.6" y="6.6" width="18.8" height="3.2"/><rect x="0.6" y="10.4" width="18.8" height="9.6"/></g><g fill="#17a1e6"><path d="M3 2.9 L5 2.55 L6.4 5.3 L4.4 5.65 Z M8 2.1 L10 1.75 L11.4 4.5 L9.4 4.85 Z M13 1.25 L15 0.9 L16.4 3.65 L14.4 4 Z"/><path d="M3.4 6.6 L5.4 6.6 L4 9.8 L2 9.8 Z M8.4 6.6 L10.4 6.6 L9 9.8 L7 9.8 Z M13.4 6.6 L15.4 6.6 L14 9.8 L12 9.8 Z"/><path d="M14.2 11.4 C11.6 11.3 9.6 12.5 8.4 14.6 L6.8 14.8 L5.6 16.2 L7.4 16.4 L9.2 18.2 L9.4 20 L10.8 18.8 L11 17.2 C13.1 16 14.3 14 14.2 11.4 Z"/></g><circle cx="11.6" cy="14" r="0.9" fill="#fff"/></svg>
<div class="in" style="left:1483px;top:226px;width:292px;height:37px"></div>
<svg style="left:1493px;top:234px" width="20" height="20" viewBox="0 0 20 21" fill="none" stroke="#1ea3e8"><circle cx="12.4" cy="7.6" r="5.6" stroke-width="2.2"/><path d="M8.2 11.8 L1.8 18.8" stroke-width="3" stroke-linecap="round"/></svg>
<div class="t ph" style="left:1518px;top:244px;font-size:15.5px;letter-spacing:-0.25px">Search</div>
<svg style="left:1796px;top:233px" width="24" height="22" viewBox="0 0 24 22" fill="#1ea3e8"><path d="M9.5 0.4 L18 4.4 L9.5 8.4 L1 4.4 Z"/><path d="M0.4 5.8 L8.8 9.8 V20.2 L0.4 16.2 Z"/><path d="M18.6 5.8 L10.2 9.8 V20.2 L12.6 19 C12.6 14.6 15 12.4 18.6 12.4 Z"/><circle cx="18.6" cy="17.2" r="4.4"/></svg>
<div class="b" style="left:1830px;top:226px;width:38px;height:37px;border-radius:5px"></div>
<svg style="left:1840px;top:234px" width="18" height="20" viewBox="0 0 18 20" fill="#fff"><path d="M0.2 0.4 H17.8 L10.6 10.4 H7.4 Z"/><path d="M7.4 12 H10.6 V16.6 L7.4 19.6 Z"/></svg>
<div class="b" style="left:1873px;top:226px;width:37px;height:37px;border-radius:5px"></div>
<svg style="left:1882px;top:234px" width="19" height="21" viewBox="0 0 19 21" fill="none" stroke="#fff" stroke-width="2.6"><path d="M9.5 14.5 V2.4 M1.8 9.4 L9.5 1.8 L17.2 9.4"/><path d="M0.5 18.8 H18.5" stroke-width="2.8"/></svg>
<svg style="left:1482px;top:287px" width="8" height="11" viewBox="0 0 8 11"><path d="M0.8 1.2 L6.6 5.5 L0.8 9.8 Z" fill="none" stroke="#858585" stroke-width="1.4"/></svg>
<svg style="left:1498px;top:285px" width="18" height="16" viewBox="0 0 18 16"><path d="M0.4 0.8 H5.4 L7 2.4 H13.4 V4 H3.4 L1.6 11 H0.4 Z" fill="#fff"/><path d="M3.8 4.8 H16.4 L14.4 12.4 H1.8 Z" fill="#fff"/><path d="M13 7.2 L17.4 9.2 V13.8 L13 15.8 L8.6 13.8 V9.2 Z" fill="#fff" stroke="#252932" stroke-width="1.2"/><path d="M8.8 9.4 L13 11.4 L17.2 9.4 M13 11.4 V15.6" stroke="#252932" stroke-width="1" fill="none"/></svg>
<div class="t" style="left:1525px;top:293px;letter-spacing:-0.1px">Misc</div>
<svg style="left:1862px;top:287px" width="17" height="12" viewBox="0 0 17 12"><path d="M0.8 6 C3 2.2 5.6 0.9 8.5 0.9 C11.4 0.9 14 2.2 16.2 6 C14 9.8 11.4 11.1 8.5 11.1 C5.6 11.1 3 9.8 0.8 6 Z" fill="none" stroke="#fff" stroke-width="1.7"/><circle cx="8.5" cy="5.8" r="2.7" fill="#fff"/></svg><svg style="left:1889px;top:285.5px" width="14" height="17" viewBox="0 0 14 17"><path d="M3.4 7 V4.6 C3.4 0.2 10.6 0.2 10.6 4.6 V7" fill="none" stroke="#1e212b" stroke-width="2"/><rect x="0.4" y="6.6" width="13.2" height="10" rx="1.4" fill="#1e212b"/><path d="M7 10 V13.5" stroke="#252932" stroke-width="1.3"/></svg>
<svg style="left:1481px;top:319px" width="10" height="10"><path d="M9.6 0.2 V9.6 H0.2 Z" fill="#8a8a8a"/></svg>
<svg style="left:1498px;top:318px" width="18" height="16" viewBox="0 0 18 16"><rect x="0.9" y="1" width="16" height="13.6" fill="none" stroke="#fff" stroke-width="1.6"/><rect x="0.2" y="0.2" width="17.4" height="2.2" fill="#fff"/></svg>
<div class="t" style="left:1525px;top:326px;letter-spacing:-0.27px">UI Container</div>
<svg style="left:1862px;top:320px" width="17" height="12" viewBox="0 0 17 12"><path d="M0.8 6 C3 2.2 5.6 0.9 8.5 0.9 C11.4 0.9 14 2.2 16.2 6 C14 9.8 11.4 11.1 8.5 11.1 C5.6 11.1 3 9.8 0.8 6 Z" fill="none" stroke="#fff" stroke-width="1.7"/><circle cx="8.5" cy="5.8" r="2.7" fill="#fff"/></svg><svg style="left:1889px;top:318.5px" width="14" height="17" viewBox="0 0 14 17"><path d="M3.4 7 V4.6 C3.4 0.2 10.6 0.2 10.6 4.6 V7" fill="none" stroke="#1e212b" stroke-width="2"/><rect x="0.4" y="6.6" width="13.2" height="10" rx="1.4" fill="#1e212b"/><path d="M7 10 V13.5" stroke="#252932" stroke-width="1.3"/></svg>
<svg style="left:1494px;top:352px" width="10" height="10"><path d="M9.4 0.2 V9.4 H0.2 Z" fill="#8a8a8a"/></svg>
<svg style="left:1510px;top:351px" width="17" height="15" viewBox="0 0 17 15"><rect x="0.9" y="0.9" width="15.2" height="13.2" fill="none" stroke="#fff" stroke-width="1.8"/><rect x="0" y="12.4" width="17" height="2.6" fill="#fff"/><path d="M3.6 10.6 L4.8 7 C5.2 5 6 3.8 7 3.8 C7.9 3.8 8.6 4.6 9 5.8 L10 3.9 L10.8 3.9 L13.8 10.6 H12.8 L10.6 5.6 L11.8 10.6 Z" fill="#fff"/></svg>
<div class="t" style="left:1538px;top:358px;letter-spacing:-0.2px">Panel</div>
<svg style="left:1862px;top:352.5px" width="17" height="12" viewBox="0 0 17 12"><path d="M0.8 6 C3 2.2 5.6 0.9 8.5 0.9 C11.4 0.9 14 2.2 16.2 6 C14 9.8 11.4 11.1 8.5 11.1 C5.6 11.1 3 9.8 0.8 6 Z" fill="none" stroke="#fff" stroke-width="1.7"/><circle cx="8.5" cy="5.8" r="2.7" fill="#fff"/></svg><svg style="left:1889px;top:351px" width="14" height="17" viewBox="0 0 14 17"><path d="M3.4 7 V4.6 C3.4 0.2 10.6 0.2 10.6 4.6 V7" fill="none" stroke="#1e212b" stroke-width="2"/><rect x="0.4" y="6.6" width="13.2" height="10" rx="1.4" fill="#1e212b"/><path d="M7 10 V13.5" stroke="#252932" stroke-width="1.3"/></svg>
<div class="a" style="left:1480px;top:374px;width:433px;height:33px;border:1.5px solid #1ea3e8;background:#22252f"></div>
<svg style="left:1523px;top:383px" width="17" height="15" viewBox="0 0 17 15"><rect x="0.9" y="0.9" width="15.2" height="13.2" fill="none" stroke="#fff" stroke-width="1.8"/><rect x="0" y="12.4" width="17" height="2.6" fill="#fff"/><path d="M3.6 10.6 L4.8 7 C5.2 5 6 3.8 7 3.8 C7.9 3.8 8.6 4.6 9 5.8 L10 3.9 L10.8 3.9 L13.8 10.6 H12.8 L10.6 5.6 L11.8 10.6 Z" fill="#fff"/></svg>
<div class="t" style="left:1550px;top:391px;letter-spacing:0.1px">Ribbon</div>
<svg style="left:1862px;top:385px" width="17" height="12" viewBox="0 0 17 12"><path d="M0.8 6 C3 2.2 5.6 0.9 8.5 0.9 C11.4 0.9 14 2.2 16.2 6 C14 9.8 11.4 11.1 8.5 11.1 C5.6 11.1 3 9.8 0.8 6 Z" fill="none" stroke="#fff" stroke-width="1.7"/><circle cx="8.5" cy="5.8" r="2.7" fill="#fff"/></svg><svg style="left:1889px;top:383.5px" width="14" height="17" viewBox="0 0 14 17"><path d="M3.4 7 V4.6 C3.4 0.2 10.6 0.2 10.6 4.6 V7" fill="none" stroke="#1e212b" stroke-width="2"/><rect x="0.4" y="6.6" width="13.2" height="10" rx="1.4" fill="#1e212b"/><path d="M7 10 V13.5" stroke="#252932" stroke-width="1.3"/></svg>
<!-- ===== bottom panel ===== -->
<div class="dk" style="left:0;top:801px;width:1473px;height:46px"></div>
<div class="a" style="left:1px;top:799px;width:947px;height:2px;background:#20232e"></div>
<div class="pn" style="left:0;top:808px;width:183px;height:40px;border-radius:5px 5px 0 0"></div>
<div class="pn" style="left:0;top:847px;width:1466px;height:150px"></div>
<div class="dk" style="left:1466px;top:801px;width:7px;height:196px"></div>
<svg style="left:6px;top:816px" width="24" height="23" viewBox="0 0 24 23" fill="#1ea3e8"><path d="M0.6 16.6 V0.6 H7.6 L9.4 2.5 H19.8 V4.4" fill="none" stroke="#1ea3e8" stroke-width="1.2"/><path d="M4.4 4.6 H23.3 V8.4 C19 8.8 15.6 10.4 13 13.2 L9.6 13.8 L7.4 16.9 H0.6 Z"/><path d="M22.8 9.4 C23.4 13.2 21.6 16.6 17.8 18.6 L14 14.8 C16 11.4 19 9.6 22.8 9.4 Z"/><circle cx="19.3" cy="12.9" r="1.15" fill="#252932"/><path d="M13.2 14.6 L10.2 15.2 L8.8 17.2 L12 17 Z"/><path d="M17.8 19.4 L17.4 22.6 L19.4 21.2 L19.9 18.2 Z"/><path d="M12.7 17.4 L10 20.2 L11.7 21.8 L14.5 19.1 Z"/></svg>
<div class="t bl" style="left:36px;top:827px;letter-spacing:0.05px">Project Content</div>
<svg style="left:164px;top:822px" width="12" height="12" viewBox="0 0 12 12" stroke="#1ea3e8" stroke-width="2.1" fill="none"><path d="M1 1 L11 11 M11 1 L1 11"/></svg>
<svg style="left:188px;top:816px" width="24" height="23" viewBox="0 0 24 23" fill="none" stroke="#4b4f63" stroke-width="2"><path d="M4.4 17 V4.2 C4.4 2.2 3.4 1.2 1.4 1.2 H18.6 C20.4 1.2 21.2 2.2 21.2 4 V17"/><path d="M4.6 17.2 H22.8 V19.4 C22.8 21 22 21.8 20.4 21.8 H6.8 C5.2 21.8 4.4 21 4.4 19.4 V17" /><path d="M11 6.4 L8.8 8.8 L11 11.2 M14.6 6.4 L16.8 8.8 L14.6 11.2" stroke-width="1.5"/></svg>
<div class="t gr" style="left:219px;top:827px;letter-spacing:0">Script Helper</div>
<svg style="left:326px;top:822px" width="11" height="11" viewBox="0 0 11 11" stroke="#4b4f63" stroke-width="1.8" fill="none"><path d="M0.8 0.8 L10.2 10.2 M10.2 0.8 L0.8 10.2"/></svg>
<svg style="left:352px;top:816px" width="22" height="23" viewBox="0 0 22 23"><path d="M11 0.4 L21.4 5.8 V16.4 L11 22.6 L0.6 16.4 V5.8 Z" fill="#4b4f63"/><path d="M11 3.6 L18.2 7.4 C18.2 12 15.8 16 11.6 18.6 V21.6 H10.4 V18.6 C6.2 16 3.8 12 3.8 7.4 Z" fill="#1b1f28"/><circle cx="11" cy="11.4" r="5.4" fill="#4b4f63"/></svg>
<div class="t gr" style="left:382px;top:827px;letter-spacing:-0.15px">Core Content</div>
<svg style="left:490px;top:822px" width="11" height="11" viewBox="0 0 11 11" stroke="#4b4f63" stroke-width="1.8" fill="none"><path d="M0.8 0.8 L10.2 10.2 M10.2 0.8 L0.8 10.2"/></svg>
<svg style="left:517px;top:816px" width="18" height="23" viewBox="0 0 18 23" fill="none" stroke="#4b4f63" stroke-width="1.8"><rect x="1" y="3.6" width="16" height="18.4" rx="1"/><path d="M5.4 3.6 V2 H7.4 C7.6 0.4 10.4 0.4 10.6 2 H12.6 V3.6" stroke-width="1.5"/><path d="M4.2 8.6 H13.8 M4.2 12.6 H13.8 M4.2 16.6 H13.8" stroke-width="1.6"/></svg>
<div class="t gr" style="left:546px;top:827px;letter-spacing:-0.15px">Event Log</div>
<svg style="left:629px;top:822px" width="11" height="11" viewBox="0 0 11 11" stroke="#4b4f63" stroke-width="1.8" fill="none"><path d="M0.8 0.8 L10.2 10.2 M10.2 0.8 L0.8 10.2"/></svg>
<div class="a" style="left:13px;top:864px;width:0;height:0;border-left:8.5px solid transparent;border-right:8.5px solid transparent;border-top:10px solid #fff"></div>
<div class="t" style="left:40px;top:868px;letter-spacing:-0.14px">All Content</div>
<div class="t bl" style="left:56px;top:906px;letter-spacing:0.17px">My Templates</div>
<div class="t bl" style="left:56px;top:943px;letter-spacing:0.1px">My Scripts</div>
<div class="t bl" style="left:56px;top:981px;letter-spacing:0.1px">My Materials</div>
<div class="dk" style="left:376px;top:847px;width:5px;height:150px"></div>
<div class="a" style="left:376px;top:852px;width:5px;height:94px;background:#17a1e6"></div>
<div class="in" style="left:390px;top:850px;width:500px;height:37px"></div>
<svg style="left:400px;top:857px" width="20" height="20" viewBox="0 0 20 21" fill="none" stroke="#1ea3e8"><circle cx="12.4" cy="7.6" r="5.6" stroke-width="2.2"/><path d="M8.2 11.8 L1.8 18.8" stroke-width="3" stroke-linecap="round"/></svg>
<div class="t ph" style="left:425px;top:868px;font-size:15.5px;letter-spacing:-0.25px">Search</div>
<div class="b" style="left:1217px;top:849px;width:37px;height:38px"></div>
<svg style="left:1222px;top:857px" width="28" height="21" viewBox="0 0 28 21" fill="#fff"><path d="M1 1 H8.6 L10.6 3.6 H22.6 V6.4 H6.2 L2.4 18 H1 Z"/><path d="M7 7.6 H27.4 L23.6 20.4 H2.6 Z"/></svg>
<div class="b" style="left:1259px;top:849px;width:57px;height:38px"></div>
<svg style="left:1270px;top:858px" width="18" height="20" viewBox="0 0 18 20" fill="#fff"><path d="M0.2 0.4 H17.8 L10.6 10.4 H7.4 Z"/><path d="M7.4 12 H10.6 V16.6 L7.4 19.6 Z"/></svg>
<div class="car" style="left:1298px;top:865px"></div>
<div class="bd" style="left:1321px;top:849px;width:143px;height:38px;background:#1e658f"></div>
<div class="t bt" style="left:1329px;top:868px;letter-spacing:-0.38px;color:#2b2e36">Publish Content</div>
<div class="dk" style="left:391px;top:893px;width:30px;height:30px"></div>
<svg style="left:392px;top:902px" width="28" height="11" viewBox="0 0 28 11"><defs><linearGradient id="gb" x1="0" y1="0" x2="0" y2="1"><stop offset="0" stop-color="#b8ee50"/><stop offset="0.55" stop-color="#8ed63c"/><stop offset="1" stop-color="#5aa82c"/></linearGradient></defs><rect x="0.2" y="0.6" width="27.6" height="10" rx="3.2" fill="url(#gb)"/><circle cx="5.6" cy="5.4" r="2.4" fill="#f2c21c"/><circle cx="5.6" cy="5.4" r="1" fill="#e08a14"/></svg>
<div class="t" style="left:424px;top:908px;letter-spacing:-0.1px">Buy</div>
<div class="dk" style="left:391px;top:926px;width:30px;height:30px"></div>
<svg style="left:391px;top:936px" width="30" height="9" viewBox="0 0 30 9"><rect x="3" y="1" width="26.6" height="7" rx="2.4" fill="#f2ae1a"/><rect x="8.6" y="2.6" width="18.6" height="3.8" rx="1" fill="#a4702c"/><circle cx="4" cy="4.4" r="3.8" fill="#fbd23a"/><circle cx="4" cy="4.4" r="2" fill="#f0a818"/></svg>
<div class="t" style="left:424px;top:941px;letter-spacing:-0.1px">Coins</div>
<div class="dk" style="left:391px;top:958px;width:30px;height:27px"></div>
<div class="a" style="left:394px;top:958px;width:24px;height:27px;border-radius:2px;background:#f7e5ac;box-shadow:inset 0 0 3px 1px #e6c27e"></div>
<div class="t" style="left:424px;top:973px;letter-spacing:-0.1px">Panel</div>
<div class="dk" style="left:928px;top:893px;width:30px;height:30px"></div>
<svg style="left:929px;top:893px" width="29" height="28" viewBox="0 0 29 28"><defs><linearGradient id="gc" x1="0" y1="0" x2="0" y2="1"><stop offset="0" stop-color="#f0484c"/><stop offset="1" stop-color="#c41c26"/></linearGradient></defs><circle cx="14.4" cy="13.9" r="13.4" fill="#f6dede"/><circle cx="14.4" cy="13.9" r="11.8" fill="url(#gc)"/><path d="M10.4 9.6 L18.6 17.8 M18.6 9.6 L10.4 17.8" stroke="#fff" stroke-width="3.6"/></svg>
<div class="t" style="left:961px;top:908px;letter-spacing:-0.14px">Close Icon</div>
<div class="dk" style="left:928px;top:926px;width:30px;height:30px"></div>
<div class="a" style="left:928px;top:937px;width:30px;height:7px;background:linear-gradient(180deg,#e2b676,#ecc588 60%,#e0b472)"></div>
<div class="t" style="left:961px;top:941px;letter-spacing:0.06px">Item Panel</div>
<div class="a" style="left:927px;top:957px;width:537px;height:40px;border:1px solid #1ea3e8;border-bottom:none"></div>
<div class="pn" style="left:926px;top:985px;width:540px;height:12px"></div>
<div class="dk" style="left:928px;top:958px;width:30px;height:27px"></div>
<svg style="left:928px;top:968px" width="30" height="9" viewBox="0 0 30 9"><path d="M0.4 2.6 L5 3 L6 1.6 C11 -0.2 19 -0.2 24 1.6 L25 3 L29.6 2.2 L27.4 5 L29.6 7.4 L23 7.6 L21.6 5.6 C17 4.6 13 4.6 8.4 5.6 L7 7.8 L0.4 8 L2.8 5.2 Z" fill="#8edb35"/><path d="M11 1.4 H19 V3.6 H11 Z" fill="#dff3c0"/><path d="M5.6 6 L8 5.4 L7 8 Z M24.4 6 L22 5.4 L23 8 Z" fill="#4e9c2a"/></svg>
<div class="t" style="left:961px;top:973px;letter-spacing:0.1px">Ribbon</div>
<div class="a" style="left:1457px;top:894px;width:5px;height:86px;background:#17a1e6"></div>
<div class="b" style="left:1427px;top:990px;width:37px;height:12px;border-radius:5px"></div>
</div></body>
</html>
